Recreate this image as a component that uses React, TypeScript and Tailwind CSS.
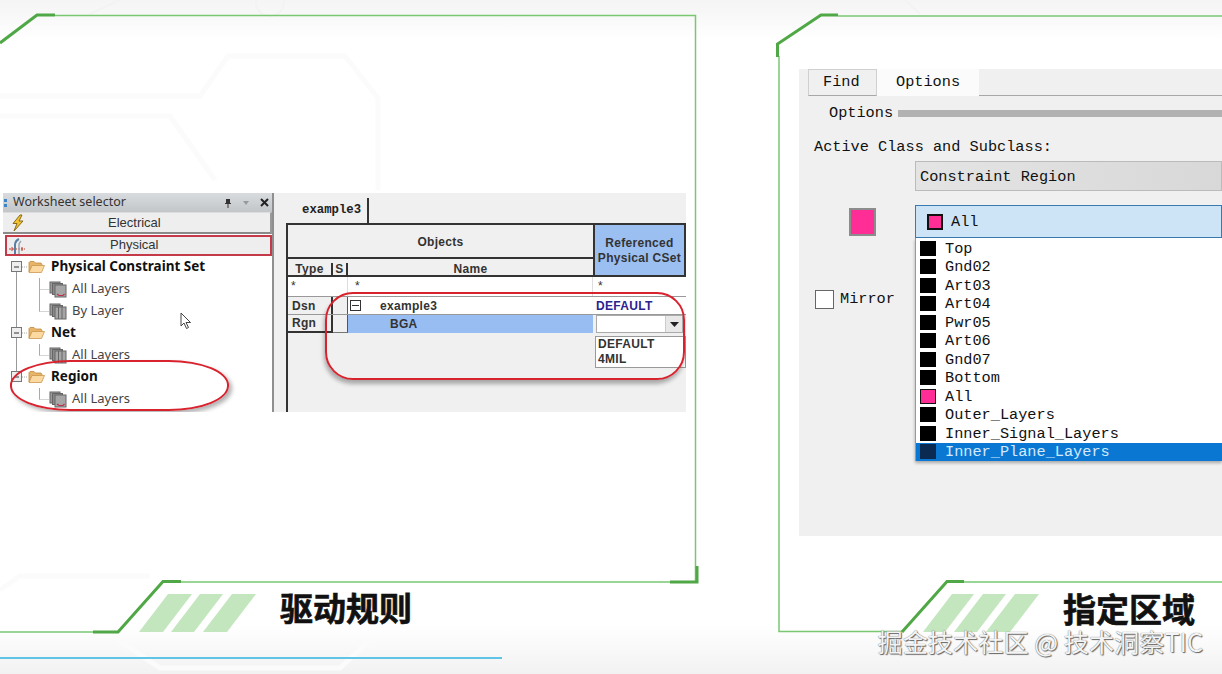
import React from 'react';

const sans = "font-['Noto_Sans',sans-serif]";
const mono = "font-['Liberation_Mono',monospace]";

const layerRows = ['Top', 'Gnd02', 'Art03', 'Art04', 'Pwr05', 'Art06', 'Gnd07', 'Bottom', 'All', 'Outer_Layers', 'Inner_Signal_Layers', 'Inner_Plane_Layers'];

const Backdrop = () => (
    <svg className="absolute inset-0 pointer-events-none" width="1222" height="674" fill="none">
        {/* faint circuit traces */}
        <g stroke="#fbfbfb" strokeWidth="5">
            <path d="M0 96H200L228 56H345L378 98V190" />
            <path d="M0 116H170L215 180" />
            <path d="M0 590L20 576H150M118 640L160 668H340L370 640" />
        </g>
        <g stroke="#f3f3f3" strokeWidth="2">
            <circle cx="270" cy="2" r="14" />
            <path d="M90 14L120 0M920 14L905 0" />
        </g>
        {/* left frame */}
        <path d="M55 15.5H695.5V582H181M93 632H0" stroke="#78c871" strokeWidth="1.5" />
        <path d="M0 43L37 15H55M93 632H118L163 581.5H181M670 582H697V566" stroke="#4fa845" strokeWidth="3" />
        {/* right frame */}
        <path d="M838 16H1222M779 56V631.5H902M964 582H1222" stroke="#78c871" strokeWidth="1.5" />
        <path d="M777.5 57V44L821 15H838M902 632L947 581.5H964" stroke="#4fa845" strokeWidth="3" />
        {/* title stripes */}
        <g fill="#c3e6be">
            <path d="M168 594H192L163 632H139Z" />
            <path d="M200 594H223L194 632H171Z" />
            <path d="M232 594H256L227 632H203Z" />
            <path d="M952 594H974L945 632H923Z" />
            <path d="M983 594H1006L977 632H954Z" />
            <path d="M1015 594H1039L1010 632H986Z" />
        </g>
    </svg>
);

const Bolt = () => (
    <svg width="14" height="18" viewBox="0 0 14 18">
        <path d="M9 1L2 9.500H6L3 17L12 7H8L11 1Z" fill="#f2c230" stroke="#8a6a1c" strokeWidth="1" />
    </svg>
);

const PhysicalIcon = () => (
    <svg width="18" height="18" viewBox="0 0 18 18" fill="none">
        <path d="M1 12H17" stroke="#c0392b" strokeWidth="1" strokeDasharray="2 1" />
        <path d="M7 17V8C7 4 9 3 11 2" stroke="#5a7fa5" strokeWidth="2" />
        <path d="M11 17V8C11 6 12 5 13 4" stroke="#9aa5b0" strokeWidth="1.500" />
        <path d="M4 10V14M14 10V14" stroke="#c0392b" strokeWidth="1" />
    </svg>
);

const Folder = () => (
    <svg width="17" height="14" viewBox="0 0 17 14">
        <path d="M1 12V2.500L2 1.500H6L7.500 3H13L14 4.500V6H4L1 12Z" fill="#e8b468" stroke="#c08a3e" strokeWidth="0.800" />
        <path d="M1 12.500L4 5.500H16.500L13.500 12.500Z" fill="#fbd9a0" stroke="#cc9850" strokeWidth="0.800" />
    </svg>
);

const Layers = ({ red }: { red?: boolean }) => (
    <svg width="18" height="17" viewBox="0 0 18 17">
        <rect x="1" y="1" width="10" height="11" fill="#9a9a9a" stroke="#666" />
        <rect x="3.500" y="2.500" width="10" height="11" fill="#8a8a8a" stroke="#666" />
        <rect x="6" y="4" width="11" height="12" fill="#a6a6a6" stroke="#666" />
        {red ? (
            <path d="M8 13L10 14.500H14L15.500 13" stroke="#c0304a" fill="none" strokeWidth="1.200" />
        ) : (
            <path d="M9.500 4V16M13 4V16" stroke="#666" strokeWidth="1" />
        )}
    </svg>
);

const TreeParent = ({ label }: { label: string }) => (
    <div className="h-[22px] flex items-center">
        <div className="w-[25px]" />
        <Folder />
        <span className={`ml-[6px] pb-[2px] text-[13.500px] font-bold text-[#111] ${sans}`}>{label}</span>
    </div>
);

const TreeChild = ({ label, red }: { label: string; red?: boolean }) => (
    <div className="h-[22px] flex items-center">
        <div className="w-[46px]" />
        <Layers red={red} />
        <span className={`ml-[5px] text-[13px] text-[#444] ${sans}`}>{label}</span>
    </div>
);

const WorksheetSelector = () => (
    <div className="w-[269px] h-full bg-white relative overflow-hidden">
        <div className="h-[19px] bg-gradient-to-b from-[#d9dcdf] to-[#c3c6c9] flex items-center px-[1px]">
            <div className="flex flex-col gap-[2px] w-[9px]">
                <span className="w-[3px] h-[3px] bg-[#3d85c6]" />
                <span className="w-[3px] h-[3px] bg-[#3d85c6]" />
            </div>
            <span className={`flex-1 pb-[2px] text-[12.500px] leading-[17px] text-[#333] ${sans}`}>Worksheet selector</span>
            <div className="flex items-center gap-[10px] pr-[2px] text-[#222]">
                <svg width="8" height="10" viewBox="0 0 8 10"><path d="M2 1H6V5H7V6H4.500V10H3.500V6H1V5H2Z" fill="#333" /></svg>
                <svg width="8" height="6" viewBox="0 0 8 6"><path d="M1 1H7L4 5Z" fill="#999" /></svg>
                <svg width="9" height="9" viewBox="0 0 9 9"><path d="M1 1L8 8M8 1L1 8" stroke="#222" strokeWidth="2" /></svg>
            </div>
        </div>
        <div className="h-[22px] bg-[#eeeeee] border-t border-t-[#ddd] border-b-2 border-b-[#8a8a8a] border-r-2 border-r-[#999] flex items-center relative">
            <span className="pl-[8px]"><Bolt /></span>
            <span className={`absolute left-[105px] text-[13px] text-[#333] font-['Liberation_Sans',sans-serif]`}>Electrical</span>
        </div>
        <div className="h-[21px] mt-[1px] ml-[2px] bg-[#eeeeee] border-2 border-[#c43a48] flex items-center relative">
            <span className="pl-[1px]"><PhysicalIcon /></span>
            <span className={`absolute left-[103px] top-[-2px] text-[13px] text-[#333] font-['Liberation_Sans',sans-serif]`}>Physical</span>
        </div>
        <div className="relative">
            {/* tree connectors */}
            <svg className="absolute left-0 top-0" width="60" height="157" fill="none">
                <path d="M36.500 33.500H46M36.500 55.500H46M36.500 99.500H46M36.500 143.500H46" stroke="#aaa" strokeDasharray="1 1" />
                <path d="M13.500 16V116" stroke="#999" />
                {[11, 77, 121].map(y => (
                    <g key={y}>
                        <rect x="8.500" y={y - 5.500} width="10" height="10" fill="#eee" stroke="#777" />
                        <path d={`M11 ${y}H16`} stroke="#333" />
                        <path d={`M19 ${y}H25`} stroke="#aaa" strokeDasharray="1 1" />
                    </g>
                ))}
                <path d="M36.500 22V55.500" stroke="#aaa" />
                <path d="M36.500 88V99.500" stroke="#aaa" />
                <path d="M36.500 132V143.500" stroke="#aaa" />
            </svg>
            <TreeParent label="Physical Constraint Set" />
            <TreeChild label="All Layers" red />
            <TreeChild label="By Layer" />
            <TreeParent label="Net" />
            <TreeChild label="All Layers" />
            <TreeParent label="Region" />
            <TreeChild label="All Layers" red />
        </div>
        {/* mouse cursor */}
        <svg className="absolute left-[177px] top-[119px]" width="12" height="18" viewBox="0 0 12 18">
            <path d="M1 1V14L4 11L6.500 16.500L8.500 15.500L6 10.500H10.500Z" fill="#fff" stroke="#444" strokeWidth="1" />
        </svg>
        {/* annotation */}
        <div className="absolute left-[7px] top-[167px] w-[219px] h-[51px] rounded-[60px/25px] border-2 border-[#d8232f] shadow-[3px_3px_4px_rgba(0,0,0,0.3)]" />
    </div>
);

const tableFont = "font-['Liberation_Sans',sans-serif] font-bold text-[12px] text-[#333] tracking-[0.3px]";

const ConstraintTable = () => (
    <div className="flex-1 h-full bg-[#f0f0f0] relative overflow-hidden">
        <div className="h-[30px] pl-[28px] flex items-end">
            <div className="h-[25px] w-[67px] border-r-2 border-r-[#333] flex items-center">
                <span className={`${mono} font-bold text-[12.300px] text-[#222]`}>example3</span>
            </div>
        </div>
        <div className={`ml-[12px] h-[189px] border-l-2 border-l-[#333] ${tableFont}`}>
            <div className="border-t-2 border-t-[#333] flex h-[54px]">
                <div className="w-[305px] flex flex-col">
                    <div className="h-[34px] pt-[2px] border-b-2 border-b-[#333] flex items-center justify-center">Objects</div>
                    <div className="h-[18px] flex leading-none pt-[4px] border-b-2 border-b-[#333]">
                        <div className="w-[45px] border-r-2 border-r-[#333] flex items-center justify-center">Type</div>
                        <div className="w-[15px] border-r-2 border-r-[#333] flex items-center justify-center">S</div>
                        <div className="flex-1 flex items-center justify-center">Name</div>
                    </div>
                </div>
                <div className="flex-1 bg-[#9cbff2] pt-[2px] border-x-2 border-x-[#333] border-b-2 border-b-[#333] flex flex-col items-center justify-center leading-[15px] text-center text-[#333]">
                    <span>Referenced</span>
                    <span className="whitespace-nowrap">Physical CSet</span>
                </div>
            </div>
            <div className="flex h-[20px] border-b border-b-[#999] bg-white font-normal">
                <div className="w-[60px] pl-[3px] border-r border-r-[#ddd]">*</div>
                <div className="w-[245px] pl-[7px] border-r border-r-[#ddd]">*</div>
                <div className="flex-1 pl-[5px]">*</div>
            </div>
            <div className="flex h-[18px] border-b border-b-[#999]">
                <div className="w-[45px] pl-[4px] border-r-2 border-r-[#333] flex items-center">Dsn</div>
                <div className="w-[15px] border-r border-r-[#555]" />
                <div className="w-[245px] bg-white flex items-center pl-[2px]">
                    <span className="w-[11px] h-[11px] border border-[#333] flex items-center justify-center">
                        <span className="w-[7px] h-[1px] bg-[#333]" />
                    </span>
                    <span className="ml-[19px]">example3</span>
                </div>
                <div className="flex-1 bg-white pl-[3px] flex items-center text-[#2a2390]">DEFAULT</div>
            </div>
            <div className="flex h-[18px]">
                <div className="w-[45px] pl-[4px] border-r-2 border-r-[#333] border-b-2 border-b-[#333] flex items-center">Rgn</div>
                <div className="w-[15px] border-r border-r-[#555] border-b border-b-[#777]" />
                <div className="w-[245px] bg-[#98bdf2] flex items-center pl-[42px]">BGA</div>
                <div className="flex-1 ml-[3px] mr-[3px] bg-white border border-[#aaa] flex justify-end">
                    <span className="w-[17px] bg-[#e8e8e8] border-l border-l-[#ccc] flex items-center justify-center">
                        <svg width="9" height="5" viewBox="0 0 9 5"><path d="M0 0H9L4.500 5Z" fill="#222" /></svg>
                    </span>
                </div>
            </div>
            <div className="ml-[307px] mt-[3px] h-[32px] bg-white border border-[#999] pl-[2px] leading-[15px] flex flex-col justify-center">
                <span>DEFAULT</span>
                <span>4MIL</span>
            </div>
        </div>
        {/* annotation */}
        <div className="absolute left-[51px] top-[99px] w-[360px] h-[88px] rounded-[28px] border-2 border-[#d8232f] shadow-[-1px_4px_4px_rgba(0,0,0,0.3)]" />
    </div>
);

const OptionsPanel = () => (
    <div className={`h-[467px] bg-[#f0f0f0] overflow-hidden text-[15.250px] text-[#111] ${mono}`}>
        <div className="h-[27px] flex items-stretch pl-[9px]">
            <div className="w-[69px] border border-[#d0d0d0] border-b-[#a8a8a8] flex items-center pl-[14px]">Find</div>
            <div className="w-[102px] bg-[#fbfbfb] flex items-center pl-[19px]">Options</div>
            <div className="flex-1 border-b border-b-[#a8a8a8]" />
        </div>
        <div className="flex items-center pl-[30px] mt-[7px] h-[20px]">
            <span>Options</span>
            <span className="flex-1 h-[7px] ml-[5px] bg-[#b2b2b2]" />
        </div>
        <div className="pl-[15px] mt-[14px] h-[20px] flex items-center">Active Class and Subclass:</div>
        <div className="flex mt-[4px]">
            <div className="w-[116px] shrink-0 pt-[47px]">
                <div className="ml-[50px] w-[27px] h-[28px] bg-[#ff2d96] border-2 border-[#8c8c8c]" />
                <div className="ml-[16px] mt-[52px] flex items-center gap-[6px]">
                    <span className="w-[19px] h-[19px] bg-white border border-[#666]" />
                    <span>Mirror</span>
                </div>
            </div>
            <div className="flex-1">
                <div className="h-[30px] pt-[2px] bg-gradient-to-r from-[#e4e4e4] to-[#d8d8d8] border border-[#bbb] flex items-center pl-[4px]">Constraint Region</div>
                <div className="mt-[14px] h-[33px] pt-[1px] bg-[#cde4f7] border border-[#3a7ab0] flex items-center pl-[11px] gap-[8px]">
                    <span className="w-[16px] h-[16px] bg-[#ff2d96] border-2 border-[#111]" />
                    <span>All</span>
                </div>
                <div className="bg-white pt-[1px] shadow-[0_2px_3px_rgba(0,0,0,0.3)] border-l border-l-[#999]">
                    {layerRows.map(name => {
                        const isAll = name === 'All';
                        const isActive = name === 'Inner_Plane_Layers';
                        return (
                            <div key={name} className={`h-[18.500px] flex items-center pl-[4px] ${isActive ? 'bg-[#0a78d2] text-[#d4e8ff]' : 'text-[#111]'}`}>
                                <span className={`w-[16px] h-[15px] shrink-0 ${isAll ? 'bg-[#ff2d96] border border-[#111]' : isActive ? 'bg-[#0b2a52]' : 'bg-black'}`} />
                                <span className="ml-[9px] pt-[2px]">{name}</span>
                            </div>
                        );
                    })}
                </div>
            </div>
        </div>
    </div>
);

const Title = ({ text }: { text: string }) => (
    <h2 className="text-[33px] leading-[36px] font-bold text-[#111] [-webkit-text-stroke:0.6px_#111] font-['Noto_Sans_CJK_SC',sans-serif]">{text}</h2>
);

export default function App() {
    return (
        <div className="relative w-[1222px] h-[674px] overflow-hidden bg-[linear-gradient(to_bottom,#f5f5f5_0px,#f8f8f8_15px,#ffffff_40px,#ffffff_625px,#f2f2f2_674px)]">
            <Backdrop />

            <div className="relative flex h-full">
                {/* left slide */}
                <div className="w-[796px] shrink-0 pl-[3px] pt-[193px]">
                    <div className="w-[683px] h-[219px] flex">
                        <WorksheetSelector />
                        <div className="w-[2px] bg-[#8f8f8f] shrink-0" />
                        <ConstraintTable />
                    </div>
                    <div className="pl-[277px] mt-[177px]">
                        <Title text="驱动规则" />
                    </div>
                    <div className="-ml-[3px] mt-[32px] w-[502px] h-[2px] bg-[#5ec5e6]" />
                </div>

                {/* right slide */}
                <div className="flex-1 ml-[3px] pt-[69px]">
                    <OptionsPanel />
                    <div className="pl-[264px] mt-[54px]">
                        <Title text="指定区域" />
                    </div>
                </div>
            </div>

            <div className="absolute right-[19px] top-[629px] text-[25.200px] leading-[24px] whitespace-nowrap text-[#f4f4f4] font-['Noto_Sans_CJK_SC',sans-serif] [text-shadow:0_0_1px_#555,1px_1px_1px_#666]">
                掘金技术社区 @ 技术洞察TIC
            </div>
        </div>
    );
}
